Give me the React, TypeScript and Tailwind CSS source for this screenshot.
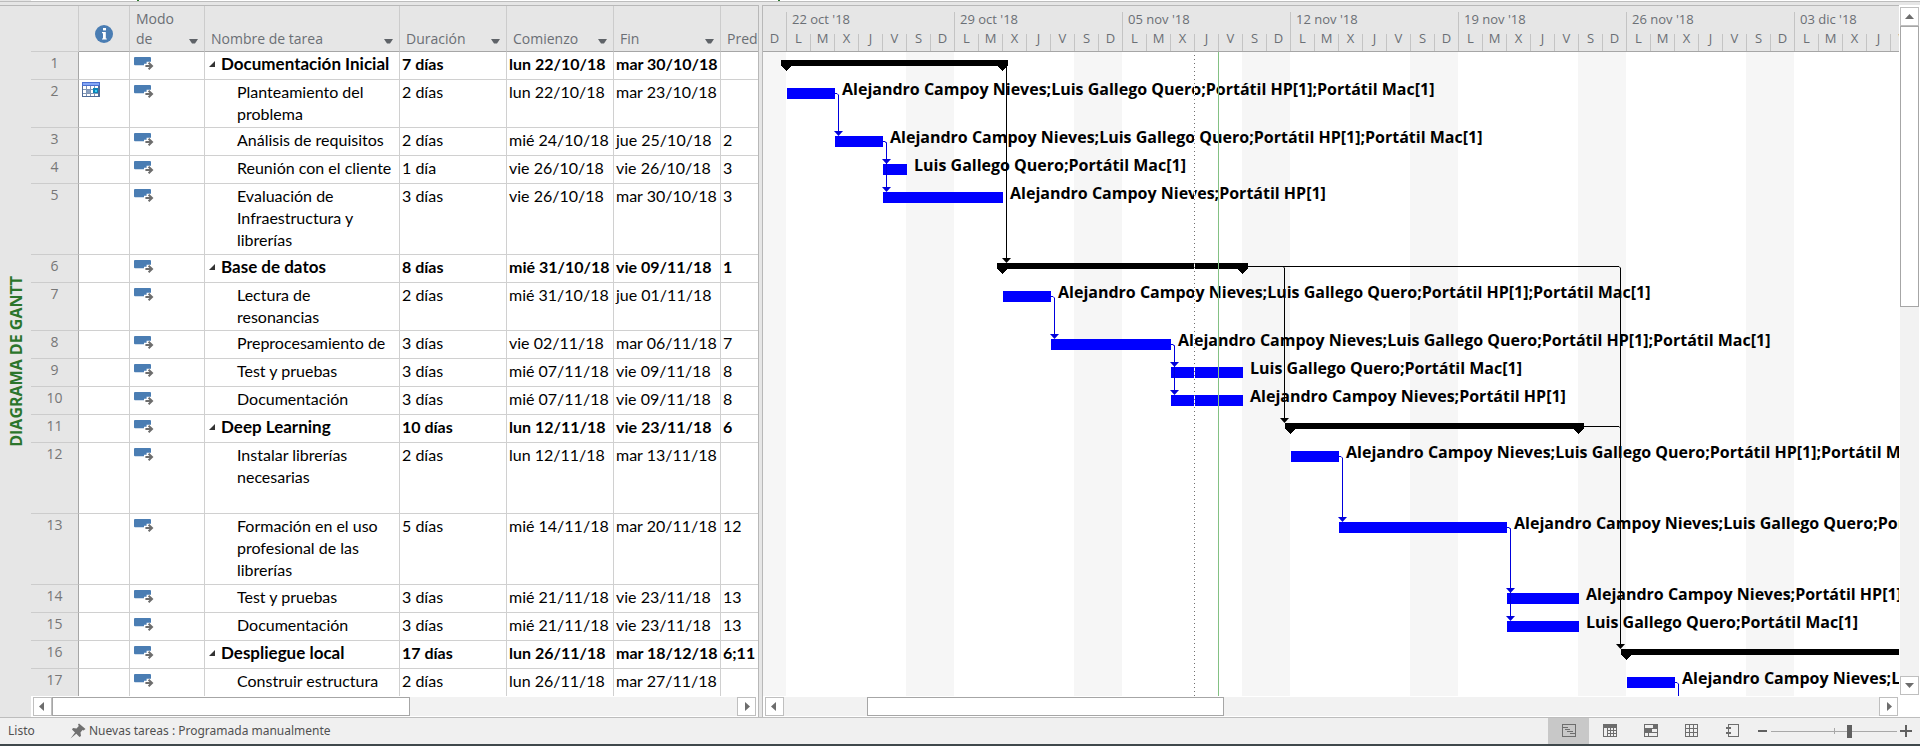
import React from "react";

type Kind = "summary" | "task";

interface Row {
  id: number;
  kind: Kind;
  name: string;
  duration: string;
  start: string;
  end: string;
  pred: string;
  height: number;
  from: number;
  to: number;
  label?: string;
  calendar?: boolean;
}

const BOTH = "Alejandro Campoy Nieves;Luis Gallego Quero;Portátil HP[1];Portátil Mac[1]";
const ALEJANDRO = "Alejandro Campoy Nieves;Portátil HP[1]";
const LUIS = "Luis Gallego Quero;Portátil Mac[1]";

// from / to are day offsets counted from Monday 22 October 2018
const rows: Row[] = [
  { id: 1, kind: "summary", name: "Documentación Inicial", duration: "7 días", start: "lun 22/10/18", end: "mar 30/10/18", pred: "", height: 28, from: 0, to: 9 },
  { id: 2, kind: "task", name: "Planteamiento del\nproblema", duration: "2 días", start: "lun 22/10/18", end: "mar 23/10/18", pred: "", height: 48, from: 0, to: 2, label: BOTH, calendar: true },
  { id: 3, kind: "task", name: "Análisis de requisitos", duration: "2 días", start: "mié 24/10/18", end: "jue 25/10/18", pred: "2", height: 28, from: 2, to: 4, label: BOTH },
  { id: 4, kind: "task", name: "Reunión con el cliente", duration: "1 día", start: "vie 26/10/18", end: "vie 26/10/18", pred: "3", height: 28, from: 4, to: 5, label: LUIS },
  { id: 5, kind: "task", name: "Evaluación de\nInfraestructura y\nlibrerías", duration: "3 días", start: "vie 26/10/18", end: "mar 30/10/18", pred: "3", height: 71, from: 4, to: 9, label: ALEJANDRO },
  { id: 6, kind: "summary", name: "Base de datos", duration: "8 días", start: "mié 31/10/18", end: "vie 09/11/18", pred: "1", height: 28, from: 9, to: 19 },
  { id: 7, kind: "task", name: "Lectura de\nresonancias", duration: "2 días", start: "mié 31/10/18", end: "jue 01/11/18", pred: "", height: 48, from: 9, to: 11, label: BOTH },
  { id: 8, kind: "task", name: "Preprocesamiento de", duration: "3 días", start: "vie 02/11/18", end: "mar 06/11/18", pred: "7", height: 28, from: 11, to: 16, label: BOTH },
  { id: 9, kind: "task", name: "Test y pruebas", duration: "3 días", start: "mié 07/11/18", end: "vie 09/11/18", pred: "8", height: 28, from: 16, to: 19, label: LUIS },
  { id: 10, kind: "task", name: "Documentación", duration: "3 días", start: "mié 07/11/18", end: "vie 09/11/18", pred: "8", height: 28, from: 16, to: 19, label: ALEJANDRO },
  { id: 11, kind: "summary", name: "Deep Learning", duration: "10 días", start: "lun 12/11/18", end: "vie 23/11/18", pred: "6", height: 28, from: 21, to: 33 },
  { id: 12, kind: "task", name: "Instalar librerías\nnecesarias", duration: "2 días", start: "lun 12/11/18", end: "mar 13/11/18", pred: "", height: 71, from: 21, to: 23, label: BOTH },
  { id: 13, kind: "task", name: "Formación en el uso\nprofesional de las\nlibrerías", duration: "5 días", start: "mié 14/11/18", end: "mar 20/11/18", pred: "12", height: 71, from: 23, to: 30, label: BOTH },
  { id: 14, kind: "task", name: "Test y pruebas", duration: "3 días", start: "mié 21/11/18", end: "vie 23/11/18", pred: "13", height: 28, from: 30, to: 33, label: ALEJANDRO },
  { id: 15, kind: "task", name: "Documentación", duration: "3 días", start: "mié 21/11/18", end: "vie 23/11/18", pred: "13", height: 28, from: 30, to: 33, label: LUIS },
  { id: 16, kind: "summary", name: "Despliegue local", duration: "17 días", start: "lun 26/11/18", end: "mar 18/12/18", pred: "6;11", height: 28, from: 35, to: 58 },
  { id: 17, kind: "task", name: "Construir estructura", duration: "2 días", start: "lun 26/11/18", end: "mar 27/11/18", pred: "", height: 28, from: 35, to: 37, label: BOTH },
];

const rowClass: Record<number, string> = { 28: "h-[28px]", 48: "h-[48px]", 71: "h-[71px]" };

const DAY = 24;
const dayX = (d: number) => 24 + d * DAY;
const rowTop = (id: number) => rows.slice(0, id - 1).reduce((sum, r) => sum + r.height, 0);
const byId = (id: number) => rows[id - 1];

const weeks = ["22 oct '18", "29 oct '18", "05 nov '18", "12 nov '18", "19 nov '18", "26 nov '18", "03 dic '18"];
const dayLetters = ["L", "M", "X", "J", "V", "S", "D"];

const taskLinks: [number, number][] = [
  [2, 3],
  [3, 4],
  [3, 5],
  [7, 8],
  [8, 9],
  [8, 10],
  [12, 13],
  [13, 14],
  [13, 15],
];

function Caret() {
  return (
    <svg width="9" height="5" viewBox="0 0 9 5" aria-hidden="true">
      <path d="M0 0H9L6 4.5H3Z" fill="#5f6368" />
    </svg>
  );
}

function ModeIcon() {
  return (
    <svg width="20" height="14" viewBox="0 0 20 14" className="block" role="img" aria-label="Programada automáticamente">
      <rect x="0" y="0" width="17" height="8.2" rx="1" fill="#4a7db3" />
      <path d="M10 6.8H12.6V4.8H17V9H10Z" fill="#fff" />
      <path d="M11.4 9H18M14.6 5.8L18 9L14.6 12.2" fill="none" stroke="#6d6d6d" strokeWidth="2" />
    </svg>
  );
}

function CalendarIcon() {
  return (
    <svg width="18" height="15" viewBox="0 0 18 15" className="block" role="img" aria-label="Restricción de fecha" shapeRendering="crispEdges">
      <rect width="18" height="15" fill="#4f6a96" />
      <rect x="0" y="0" width="18" height="4" fill="#4a6fd0" />
      <rect x="1" y="1" width="16" height="2" fill="#84a6f5" />
      <rect x="1" y="4" width="15" height="10" fill="#8095b5" />
      {[0, 1, 2, 3].map((c) =>
        [0, 1, 2].map((r) => (
          <rect key={`${c}-${r}`} x={1 + c * 4} y={4 + r * 4} width="3" height={r === 2 ? 2 : 3} fill={c === 1 && r === 1 ? "#8aa0bf" : "#fff"} />
        )),
      )}
      <rect x="11" y="6" width="5" height="5" fill="#0a83b5" />
      <rect x="13" y="8" width="2" height="2" fill="#3fd0f5" />
    </svg>
  );
}

function InfoIcon() {
  return (
    <svg width="18" height="18" viewBox="0 0 18 18" role="img" aria-label="Indicadores" className="block">
      <circle cx="9" cy="9" r="9" fill="#4a7db3" />
      <rect x="8" y="3" width="3" height="2.4" fill="#fff" />
      <path d="M7 7H10.8V13.4H11.8V14.6H7V13.4H8V8.2H7Z" fill="#fff" />
    </svg>
  );
}

function ExpandIcon() {
  return (
    <svg width="6" height="6" viewBox="0 0 6 6" className="mt-[8px] block" aria-hidden="true">
      <path d="M6 0V6H0Z" fill="#333" />
    </svg>
  );
}

const columns: { title: string; width: string }[] = [
  { title: "Nombre de tarea", width: "w-[195px]" },
  { title: "Duración", width: "w-[107px]" },
  { title: "Comienzo", width: "w-[107px]" },
  { title: "Fin", width: "w-[107px]" },
];

function HeaderCell({ lines, caret = true }: { lines: string[]; caret?: boolean }) {
  return (
    <div className={"flex h-full items-end justify-between overflow-hidden pb-[2px] pl-[6px] " + (caret ? "pr-[6px]" : "pr-0")}>
      <span className="text-left leading-5 font-normal">
        {lines.map((l) => (
          <span key={l} className="block whitespace-nowrap">
            {l}
          </span>
        ))}
      </span>
      {caret && (
        <button type="button" aria-label={`Filtrar ${lines.join(" ")}`} className="flex pb-[5px]">
          <Caret />
        </button>
      )}
    </div>
  );
}

function TaskTable() {
  const cell = "overflow-hidden border-r border-b border-[#d0d0d0] pl-[2px] pt-[1px] align-top whitespace-nowrap";
  const head = "h-[46px] border-r border-b border-r-[#cccccc] border-b-[#a6a6a6] p-0 align-bottom";
  return (
    <table className="w-full table-fixed border-separate border-spacing-0 bg-white font-['Lato','Liberation_Sans',sans-serif] text-[16px] leading-[22px] text-black">
      <colgroup>
        <col className="w-[48px]" />
        <col className="w-[51px]" />
        <col className="w-[75px]" />
        {columns.map((c) => (
          <col key={c.title} className={c.width} />
        ))}
        <col />
      </colgroup>
      <thead className="bg-[#e6e6e6] font-['Open_Sans','Noto_Sans',sans-serif] text-[14px] text-[#6b6f75]">
        <tr>
          <th className="h-[46px] border-r border-b border-[#cccccc] p-0" aria-label="Número" />
          <th className={head}>
            <div className="flex justify-center pb-[8px]">
              <InfoIcon />
            </div>
          </th>
          <th className={head}>
            <HeaderCell lines={["Modo", "de"]} />
          </th>
          {columns.map((c) => (
            <th key={c.title} className={head}>
              <HeaderCell lines={[c.title]} />
            </th>
          ))}
          <th className="h-[46px] overflow-hidden border-b border-[#a6a6a6] p-0 align-bottom">
            <HeaderCell lines={["Predecesoras"]} caret={false} />
          </th>
        </tr>
      </thead>
      <tbody>
        {rows.map((r) => {
          const bold = r.kind === "summary" ? " font-bold" : "";
          return (
            <tr key={r.id} className={rowClass[r.height]}>
              <th className="border-r border-b border-r-[#a6a6a6] border-b-[#cccccc] bg-[#e6e6e6] p-0 align-top font-['Open_Sans','Noto_Sans',sans-serif] text-[14px] font-normal text-[#777777]">
                {r.id}
              </th>
              <td className="border-r border-b border-[#d0d0d0] p-0 pt-[2px] pl-[3px] align-top">{r.calendar && <CalendarIcon />}</td>
              <td className="border-r border-b border-[#d0d0d0] p-0 pt-[5px] pl-[4px] align-top">
                <ModeIcon />
              </td>
              <td className={cell + bold}>
                {r.kind === "summary" ? (
                  <span className="flex gap-[6px] pl-[2px] text-[17px]">
                    <ExpandIcon />
                    {r.name}
                  </span>
                ) : (
                  <span className="block pl-[30px] whitespace-pre">{r.name}</span>
                )}
              </td>
              <td className={cell + bold}>{r.duration}</td>
              <td className={cell + bold}>{r.start}</td>
              <td className={cell + bold}>{r.end}</td>
              <td className={"overflow-hidden border-b border-[#d0d0d0] pt-[1px] pl-[2px] align-top whitespace-nowrap" + bold}>{r.pred}</td>
            </tr>
          );
        })}
      </tbody>
    </table>
  );
}

function Timescale() {
  return (
    <div className="flex h-[46px] shrink-0 overflow-hidden border-b border-[#a6a6a6] bg-[#e6e6e6] font-['Open_Sans','Noto_Sans',sans-serif] text-[13px] leading-[14px] text-[#6b6f75]">
      <div className="flex w-[23px] shrink-0 items-end justify-center pb-[6px]">D</div>
      {weeks.map((w) => (
        <div key={w} className="flex w-[168px] shrink-0 flex-col pt-[6px]">
          <div className="h-[22px] border-l border-[#c4c4c4] pl-[5px]">{w}</div>
          <div className="flex h-[17px]">
            {dayLetters.map((d) => (
              <div key={d} className="flex w-6 items-start justify-center border-l border-[#c4c4c4]">
                <span className="-mt-[3px]">{d}</span>
              </div>
            ))}
          </div>
        </div>
      ))}
    </div>
  );
}

function Arrow({ x, y, color }: { x: number; y: number; color: string }) {
  return <path d={`M${x - 4} ${y - 5}H${x + 5}L${x + 0.5} ${y}Z`} fill={color} />;
}

function Weekends() {
  return (
    <g fill="#f6f6f6">
      <rect x="0" y="0" width="23" height="100%" />
      {weeks.map((w, i) => (
        <rect key={w} x={23 + i * 168 + 120} y="0" width="48" height="100%" />
      ))}
    </g>
  );
}

function Bars() {
  return (
    <g shapeRendering="crispEdges">
      {rows.map((r) => {
        const y = rowTop(r.id) + 8;
        const x1 = dayX(r.from);
        const x2 = dayX(r.to);
        if (r.kind === "task") {
          return <rect key={r.id} x={x1} y={y} width={x2 - x1} height="11" fill="#0000ff" />;
        }
        return (
          <g key={r.id} fill="#000">
            <rect x={x1 - 6} y={y} width={x2 - x1 + 11} height="6" />
            <path d={`M${x1 - 6} ${y + 5}H${x1 + 5}L${x1 - 0.5} ${y + 11}Z`} />
            <path d={`M${x2 - 6} ${y + 5}H${x2 + 5}L${x2 - 0.5} ${y + 11}Z`} />
          </g>
        );
      })}
    </g>
  );
}

function Links() {
  const blue = "#0000dd";
  const s6 = rowTop(6) + 11.5;
  const s11 = rowTop(11) + 11.5;
  const x1 = dayX(9) + 3;
  const x6 = dayX(21) - 7;
  const x16 = dayX(35) - 7;
  return (
    <g fill="none">
      {taskLinks.map(([a, b]) => {
        const x = dayX(byId(a).to);
        const y1 = rowTop(a) + 13.5;
        const y2 = rowTop(b) + 8;
        return (
          <g key={`${a}-${b}`}>
            <path d={`M${x} ${y1}H${x + 2}L${x + 3.5} ${y1 + 1.5}V${y2 - 3}`} stroke={blue} />
            <Arrow x={x + 3} y={y2} color={blue} />
          </g>
        );
      })}
      <path d={`M${dayX(37)} ${rowTop(17) + 13.5}h2l1.5 1.5v40`} stroke={blue} />
      <path d={`M${x1 + 0.5} 14V${rowTop(6) + 5}`} stroke="#000" />
      <Arrow x={x1} y={rowTop(6) + 8} color="#000" />
      <path d={`M${dayX(19) + 5} ${s6}H${x6 - 1}L${x6 + 0.5} ${s6 + 1.5}V${rowTop(11) + 5}`} stroke="#000" />
      <Arrow x={x6} y={rowTop(11) + 8} color="#000" />
      <path d={`M${dayX(19) + 5} ${s6}H${x16 - 1}L${x16 + 0.5} ${s6 + 1.5}V${rowTop(16) + 5}`} stroke="#000" />
      <path d={`M${dayX(33) + 5} ${s11}H${x16 - 1}L${x16 + 0.5} ${s11 + 1.5}`} stroke="#000" />
      <Arrow x={x16} y={rowTop(16) + 8} color="#000" />
    </g>
  );
}

function StatusLines() {
  const statusX = dayX(17) - 0.5;
  return (
    <g>
      <line x1={statusX} y1="0" x2={statusX} y2="100%" stroke="#fff" />
      <line x1={statusX} y1="3" x2={statusX} y2="100%" stroke="#707070" strokeDasharray="1 3" />
      <line x1={statusX + DAY} y1="0" x2={statusX + DAY} y2="100%" stroke="#84c184" />
    </g>
  );
}

function GanttCanvas() {
  return (
    <div className="relative min-h-0 flex-1 overflow-hidden bg-white">
      <svg className="absolute inset-0 h-full w-full" aria-hidden="true">
        <Weekends />
        <Bars />
      </svg>
      {rows
        .filter((r) => r.label)
        .map((r) => (
          <span
            key={r.id}
            className="absolute font-['Open_Sans','Noto_Sans',sans-serif] text-[16px] leading-5 font-bold whitespace-nowrap text-black"
            style={{ left: dayX(r.to) + 7, top: rowTop(r.id) - 1 }}
          >
            {r.label}
          </span>
        ))}
      <svg className="absolute inset-0 h-full w-full" role="img" aria-label="Vínculos entre tareas">
        <Links />
        <StatusLines />
      </svg>
    </div>
  );
}

const arrowPaths = {
  left: "M7 1V10L2 5.5Z",
  right: "M4 1V10L9 5.5Z",
  up: "M1 8H10L5.5 3Z",
  down: "M1 3H10L5.5 8Z",
};

function ScrollButton({ dir, label }: { dir: keyof typeof arrowPaths; label: string }) {
  return (
    <button type="button" aria-label={label} className="flex h-[19px] w-[19px] shrink-0 items-center justify-center border border-[#bfbfbf] bg-white">
      <svg width="11" height="11" viewBox="0 0 11 11" aria-hidden="true">
        <path d={arrowPaths[dir]} fill="#6d6d6d" />
      </svg>
    </button>
  );
}

function ViewIcon({ name }: { name: string }) {
  return (
    <svg width="14" height="14" viewBox="0 0 14 14" fill="none" stroke="#6d6d6d" shapeRendering="crispEdges" aria-hidden="true">
      {name === "gantt" && (
        <>
          <rect x="0.5" y="0.5" width="13" height="12" />
          <path d="M1 3.5H6M3 5.5H8M5 7.5H11M8 9.5H13" />
        </>
      )}
      {name === "usage" && (
        <>
          <rect x="0" y="0" width="14" height="4" fill="#6d6d6d" stroke="none" />
          <path d="M0.5 4V12.5H13.5V4M4.5 4V12M7.5 4V12M10.5 4V12M4 6.5H13M4 9.5H13" />
        </>
      )}
      {name === "planner" && (
        <>
          <rect x="0.5" y="0.5" width="13" height="12" />
          <path d="M1 8.5H13M9.5 0V4M4.5 8V13" />
          <rect x="1" y="4" width="7" height="5" fill="#6d6d6d" stroke="none" />
          <rect x="8" y="4" width="6" height="1" fill="#6d6d6d" stroke="none" />
          <rect x="9" y="1" width="4" height="3" fill="#6d6d6d" stroke="none" />
        </>
      )}
      {name === "sheet" && (
        <>
          <rect x="0.5" y="0.5" width="12" height="12" />
          <path d="M4.5 0V13M8.5 0V13M0 4.5H13M0 8.5H13" />
        </>
      )}
      {name === "report" && (
        <>
          <rect x="2.5" y="0.5" width="10" height="12" />
          <rect x="0" y="3" width="5" height="2" fill="#6d6d6d" stroke="none" />
          <rect x="0" y="8" width="5" height="2" fill="#6d6d6d" stroke="none" />
        </>
      )}
    </svg>
  );
}

const views = [
  { name: "gantt", label: "Diagrama de Gantt" },
  { name: "usage", label: "Uso de tareas" },
  { name: "planner", label: "Organizador de equipo" },
  { name: "sheet", label: "Hoja de recursos" },
  { name: "report", label: "Informe" },
];

function StatusBar() {
  return (
    <footer className="flex h-[29px] shrink-0 items-center border-t border-b-2 border-t-[#bdbdbd] border-b-[#3f484b] bg-[#f0f0f0] font-['Noto_Sans','Open_Sans',sans-serif] text-[12px] text-[#505050]">
      <span className="w-[70px] pb-px pl-[8px]">Listo</span>
      <button type="button" className="flex items-center gap-[3px] pb-px">
        <svg width="16" height="16" viewBox="0 0 16 16" aria-hidden="true">
          <path d="M9 0.5L15.5 6L13.5 7.5L12.5 7L10.5 9.5L11 13L9.5 14L6.3 10.8L0.5 15.5L5 9.5L2 6.5L3 5L6.5 5.5L8.8 3L8 1.5Z" fill="#707070" />
        </svg>
        Nuevas tareas : Programada manualmente
      </button>
      <nav className="ml-auto flex h-full" aria-label="Vistas">
        {views.map((v, i) => (
          <button key={v.name} type="button" aria-label={v.label} className={"flex w-[41px] items-center justify-center pb-px " + (i === 0 ? "bg-[#c8c8c8]" : "")}>
            <ViewIcon name={v.name} />
          </button>
        ))}
      </nav>
      <button type="button" aria-label="Alejar" className="flex h-full w-[14px] items-center justify-end">
        <span className="h-[2px] w-[9px] bg-[#606060]" />
      </button>
      <div className="relative flex h-full items-center pr-[3px] pl-[4px]">
        <input
          type="range"
          aria-label="Zoom"
          min={0}
          max={100}
          defaultValue={63}
          className="h-[13px] w-[126px] appearance-none bg-[linear-gradient(#a8a8a8,#a8a8a8)] bg-[length:100%_1px] bg-center bg-no-repeat [&::-webkit-slider-thumb]:h-[13px] [&::-webkit-slider-thumb]:w-[5px] [&::-webkit-slider-thumb]:appearance-none [&::-webkit-slider-thumb]:bg-[#606060]"
        />
        <span className="pointer-events-none absolute top-1/2 left-1/2 h-[6px] w-px -translate-y-1/2 bg-[#a8a8a8]" />
      </div>
      <button type="button" aria-label="Acercar" className="mr-[8px] flex h-full items-center">
        <svg width="12" height="12" viewBox="0 0 12 12" aria-hidden="true">
          <path d="M5 0H7V5H12V7H7V12H5V7H0V5H5Z" fill="#606060" />
        </svg>
      </button>
    </footer>
  );
}

export default function App() {
  return (
    <div className="flex h-screen flex-col overflow-hidden bg-[#e6e6e6]">
      <div className="ml-[31px] flex h-px shrink-0 bg-white">
        <span className="ml-[106px] w-[2px] bg-[#2b7a2b]" />
        <span className="ml-[639px] w-[2px] bg-[#2b7a2b]" />
      </div>
      <div className="h-[4px] shrink-0 border-t border-[#bdbdbd]" />
      <main className="flex min-h-0 flex-1">
        <aside className="flex w-[31px] shrink-0 items-center justify-center border-t border-[#b8b8b8]">
          <h1 className="rotate-180 font-['Open_Sans','Noto_Sans',sans-serif] text-[16px] leading-5 font-bold whitespace-nowrap text-[#2b752b] [writing-mode:vertical-rl]">
            DIAGRAMA DE GANTT
          </h1>
        </aside>
        <section className="flex w-[728px] shrink-0 flex-col border-t border-r border-[#b8b8b8] bg-white" aria-label="Tabla de tareas">
          <div className="min-h-0 flex-1 overflow-hidden">
            <TaskTable />
          </div>
          <div className="flex h-[21px] shrink-0 bg-white px-[2px] py-[1px]">
            <ScrollButton dir="left" label="Desplazar tabla a la izquierda" />
            <div className="flex flex-1 bg-[#f2f2f2]">
              <div className="w-[358px] border border-[#a6a6a6] bg-white" />
            </div>
            <ScrollButton dir="right" label="Desplazar tabla a la derecha" />
          </div>
        </section>
        <div className="w-[3px] shrink-0" />
        <section className="flex min-w-0 flex-1 flex-col border-l border-[#b8b8b8] bg-white" aria-label="Diagrama">
          <div className="flex min-h-0 flex-1">
            <div className="flex min-w-0 flex-1 flex-col border-t border-[#b8b8b8]">
              <Timescale />
              <GanttCanvas />
            </div>
            <div className="flex w-[21px] shrink-0 flex-col px-[1px] pt-[2px] pb-[1px]">
              <ScrollButton dir="up" label="Desplazar hacia arriba" />
              <div className="flex-1 bg-[#f2f2f2]">
                <div className="h-[281px] border border-[#a6a6a6] bg-white" />
              </div>
              <ScrollButton dir="down" label="Desplazar hacia abajo" />
            </div>
          </div>
          <div className="flex h-[21px] shrink-0 py-[1px] pr-[22px] pl-[2px]">
            <ScrollButton dir="left" label="Desplazar diagrama a la izquierda" />
            <div className="flex flex-1 bg-[#f2f2f2]">
              <div className="ml-[83px] w-[357px] border border-[#a6a6a6] bg-white" />
            </div>
            <ScrollButton dir="right" label="Desplazar diagrama a la derecha" />
          </div>
        </section>
      </main>
      <StatusBar />
    </div>
  );
}
